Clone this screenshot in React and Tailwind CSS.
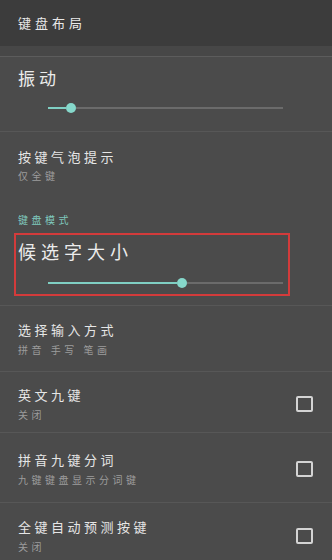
import React from 'react';

const FONT = { fontFamily: '"Noto Sans CJK SC", "Noto Sans", sans-serif' };

const Slider = ({ filled }) => (
  <div className="flex h-[10px] items-center pl-[48px] pr-[49px]">
    <div className="h-[2px] bg-[#7fcfc3]" style={{ width: filled }} />
    <div className="h-[10px] w-[10px] shrink-0 rounded-full bg-[#86d8cb]" />
    <div className="h-[2px] flex-1 bg-[#6b6b6b]" />
  </div>
);

const Checkbox = () => (
  <div className="h-[16px] w-[17px] shrink-0 rounded-[2px] border-2 border-[#d4d4d4]" />
);

const Row = ({ title, sub, check, className = '' }) => (
  <div className={`flex items-center justify-between border-b border-[#575757] pl-[18px] pr-[19px] ${className}`}>
    <div className="flex flex-col">
      <span className="text-[13px] leading-[18px] tracking-[3.5px] text-[#e6e6e6]">{title}</span>
      <span className="mt-[4px] text-[10px] leading-[14px] tracking-[3.5px] text-[#9c9c9c]">{sub}</span>
    </div>
    {check ? <Checkbox /> : null}
  </div>
);

export default function App() {
  return (
    <div className="flex h-[560px] w-[332px] flex-col overflow-hidden bg-[#4b4b4b]" style={FONT}>
      <div className="flex h-[46px] shrink-0 items-center bg-[#3c3c3c] pl-[18px]">
        <span className="text-[13px] tracking-[4px] text-[#e8e8e8]">键盘布局</span>
      </div>
      <div className="h-[11px] shrink-0 border-b border-[#5c5c5c] bg-[#474747]" />

      <div className="flex h-[75px] shrink-0 flex-col border-b border-[#575757] pt-[10px]">
        <span className="pl-[18px] text-[17px] leading-[22px] tracking-[4px] text-[#ececec]">振动</span>
        <div className="mt-[14px]">
          <Slider filled={18} />
        </div>
      </div>

      <div className="flex shrink-0 flex-col pl-[18px] pt-[16px]">
        <span className="text-[13px] leading-[18px] tracking-[3.5px] text-[#e6e6e6]">按键气泡提示</span>
        <span className="mt-[3px] text-[10px] leading-[14px] tracking-[3.5px] text-[#9c9c9c]">仅全键</span>
        <span className="mt-[30px] text-[10px] leading-[14px] tracking-[3.5px] text-[#7fc9bd]">键盘模式</span>
      </div>

      <div className="flex h-[79px] shrink-0 flex-col border-b border-[#575757] pt-[6px]">
        <div className="ml-[14px] mr-[42px] flex h-[63px] flex-col border-2 border-[#d33b3b] pt-[4px]">
          <span className="pl-[2px] text-[18px] leading-[24px] tracking-[5px] text-[#ececec]">候选字大小</span>
          <div className="mt-[15px] -ml-[16px] -mr-[44px]">
            <Slider filled={129} />
          </div>
        </div>
      </div>

      <Row className="h-[66px] shrink-0" title="选择输入方式" sub="拼音 手写 笔画" />
      <Row className="h-[61px] shrink-0 pt-[4px]" title="英文九键" sub="关闭" check />
      <Row className="h-[70px] shrink-0 pt-[3px]" title="拼音九键分词" sub="九键键盘显示分词键" check />
      <Row className="h-[66px] shrink-0 border-b-0" title="全键自动预测按键" sub="关闭" check />
    </div>
  );
}
